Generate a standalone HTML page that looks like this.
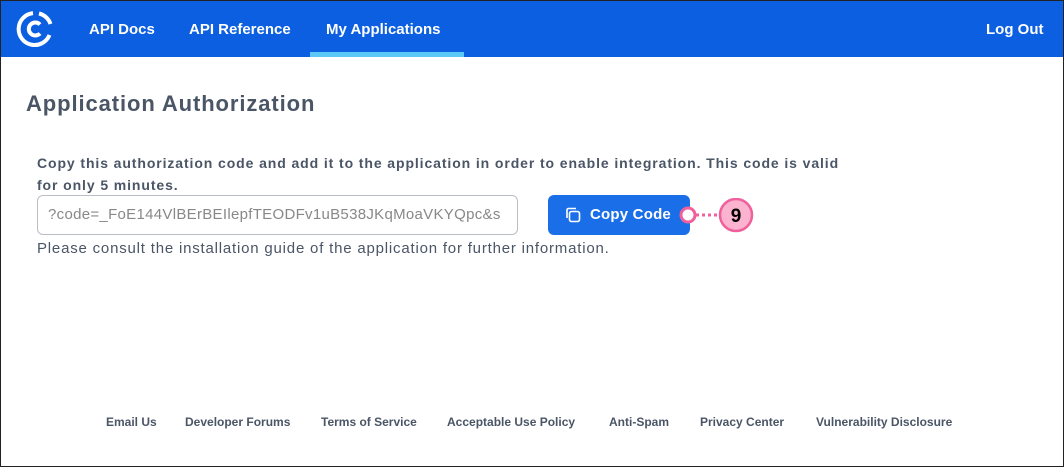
<!DOCTYPE html>
<html><head><style>
*{margin:0;padding:0;box-sizing:border-box}
body{width:1064px;height:467px;overflow:hidden;font-family:"Liberation Sans",sans-serif;background:#fff;position:relative}
.frame{position:absolute;inset:0;border:1px solid #222;pointer-events:none;z-index:5}
.nav{position:absolute;left:0;top:0;width:1064px;height:57px;background:#0b5fe0;color:#fff;font-weight:bold;font-size:15px}
.nav span{position:absolute;top:21px}
.ul{position:absolute;left:310px;top:52px;width:154px;height:5px;background:#5bc8f5}
h1{position:absolute;left:26px;top:91px;font-size:22px;letter-spacing:0.9px;color:#4a5566;font-weight:bold}
.p{position:absolute;left:37px;font-size:14px;color:#4a5566}
.input{position:absolute;left:37px;top:195px;width:481px;height:40px;border:1px solid #b9bec6;border-radius:6px;font-size:15px;letter-spacing:0.3px;color:#888;padding:10px 0 0 10px;white-space:nowrap;overflow:hidden}
.btn{position:absolute;left:548px;top:195px;width:142px;height:40px;background:#1a6fe8;border-radius:6px;color:#fff;font-weight:bold;font-size:15px;letter-spacing:0.2px;padding:11px 0 0 42px}
.foot{position:absolute;top:415px;font-size:12px;color:#4a5566;font-weight:bold}
</style></head><body>
<div class="nav">
<svg style="position:absolute;left:16px;top:10px" width="38" height="38" viewBox="0 0 38 38"><g fill="none" stroke="#fff" stroke-width="4"><path d="M17 3.1 A16 16 0 1 0 33.5 25"/><path d="M23 3.5 A16 16 0 0 1 34.5 14"/><path d="M24 14.5 A6.5 6.5 0 1 0 24 23.5"/></g></svg>
<span style="left:89px">API Docs</span><span style="left:189px">API Reference</span><span style="left:326px">My Applications</span><span style="left:986px">Log Out</span>
<div class="ul"></div></div>
<h1>Application Authorization</h1>
<div class="p" style="top:152px;font-weight:bold;line-height:22px;width:850px;letter-spacing:0.9px">Copy this authorization code and add it to the application in order to enable integration. This code is valid<br>for only 5 minutes.</div>
<div class="input">?code=_FoE144VlBErBEIlepfTEODFv1uB538JKqMoaVKYQpc&amp;s</div>
<div class="btn"><svg style="position:absolute;left:17px;top:12px" width="16" height="16" viewBox="0 0 16 16" fill="none" stroke="#fff" stroke-width="1.6"><rect x="4.5" y="4.5" width="10" height="10" rx="2"/><path d="M2 11V3a1.5 1.5 0 0 1 1.5-1.5H11"/></svg>Copy Code</div>
<svg style="position:absolute;left:676px;top:198px" width="80" height="36"><circle cx="12" cy="17" r="7" fill="#fff" stroke="#f0609c" stroke-width="3"/><line x1="20" y1="17" x2="42" y2="17" stroke="#f0609c" stroke-width="3" stroke-dasharray="3 3"/><circle cx="60" cy="17" r="16" fill="#fbb3cf" stroke="#f0609c" stroke-width="2.5"/><text x="60" y="24" text-anchor="middle" font-family="Liberation Sans" font-weight="bold" font-size="19">9</text></svg>
<div class="p" style="top:240px;font-size:15px;letter-spacing:0.8px">Please consult the installation guide of the application for further information.</div>
<div class="foot" style="left:106px">Email Us</div><div class="foot" style="left:185px">Developer Forums</div><div class="foot" style="left:321px">Terms of Service</div><div class="foot" style="left:447px">Acceptable Use Policy</div><div class="foot" style="left:609px">Anti-Spam</div><div class="foot" style="left:700px">Privacy Center</div><div class="foot" style="left:816px">Vulnerability Disclosure</div>
<div class="frame"></div>
</body></html>
